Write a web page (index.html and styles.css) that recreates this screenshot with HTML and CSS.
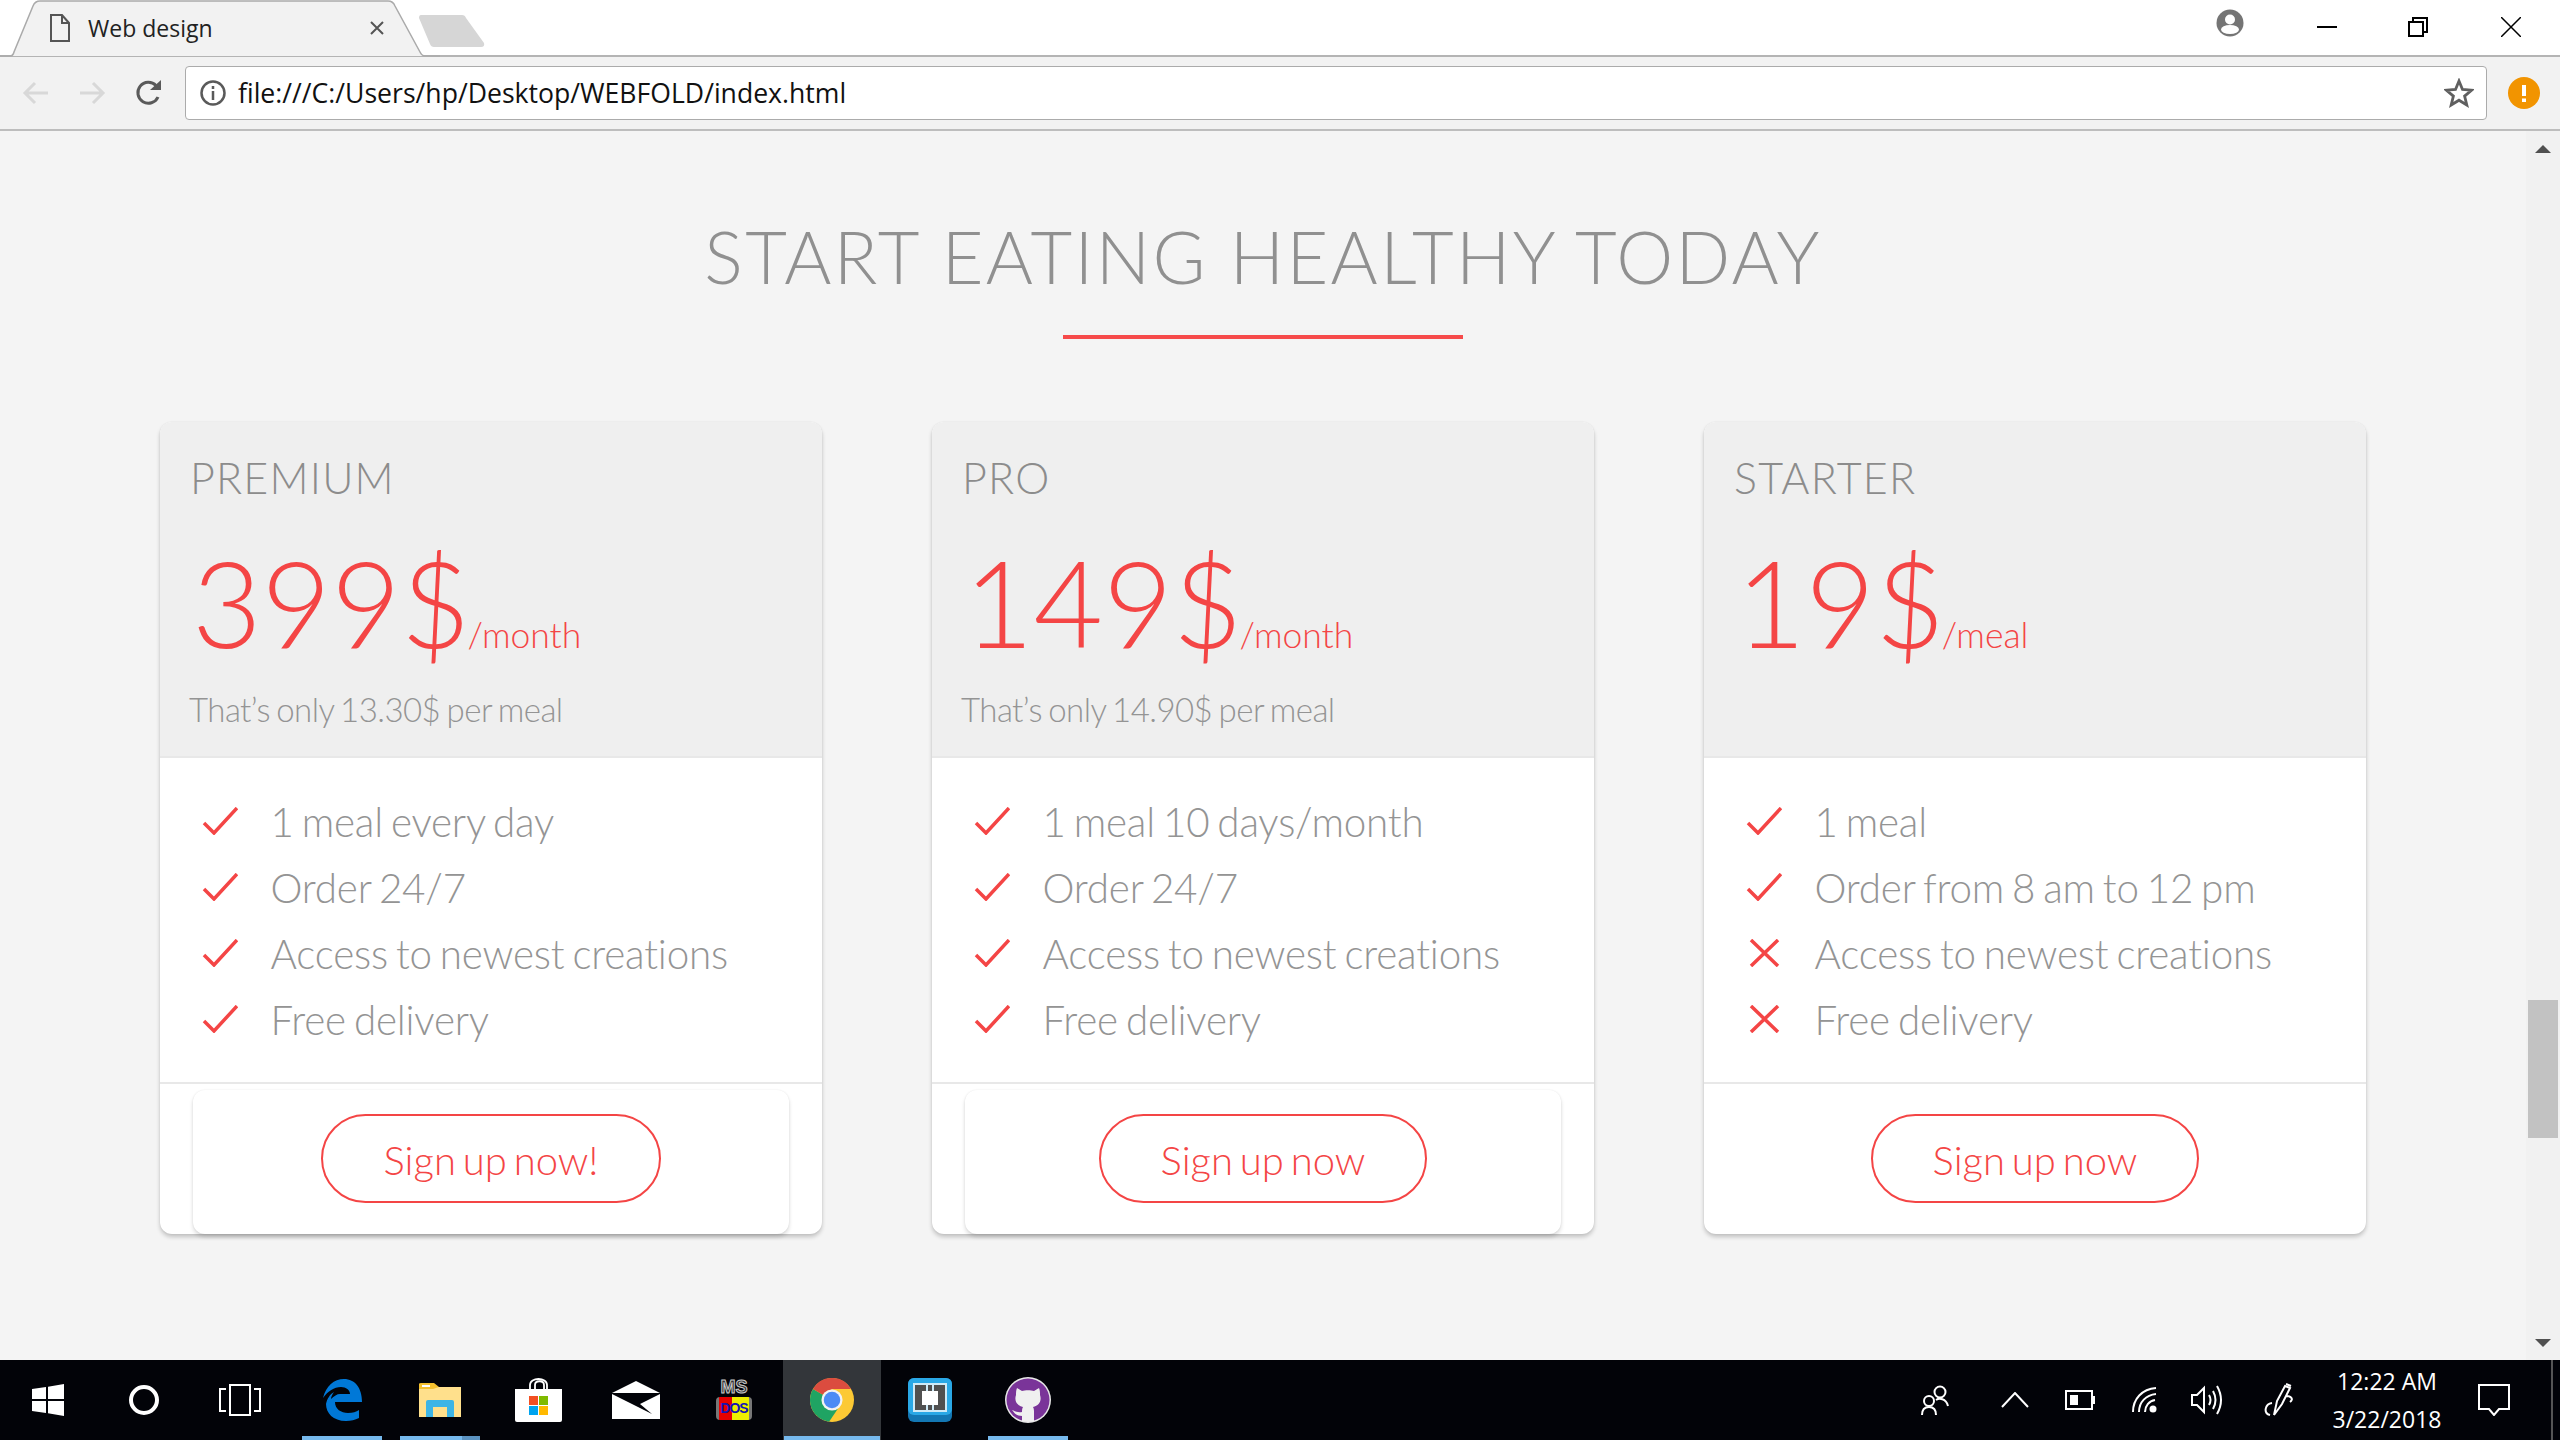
FILE: index.html
```html
<!DOCTYPE html>
<html lang="en">
<head>
<meta charset="utf-8">
<title>Web design</title>
<link rel="stylesheet" href="styles.css">
</head>
<body>
<div class="window">
  <header class="tabstrip">
    <div class="tab">
      <svg class="tab-shape" width="440" height="58" viewBox="0 0 440 58"><path d="M0 56H10Q13 56 14 52L33 6Q35 1 40 1H388Q393 1 395 6L420 52Q422 56 425 56H440" fill="#f2f2f2" stroke="#aaa" stroke-width="1.5"/></svg>
      <svg class="tab-doc" width="22" height="30" viewBox="0 0 22 30"><path d="M2 2H13L20 10V28H2ZM13 2V10H20" fill="none" stroke="#555" stroke-width="2"/></svg>
      <span class="tab-title">Web design</span>
      <svg class="tab-x" width="16" height="16" viewBox="0 0 16 16"><path d="M2 2L14 14M14 2L2 14" stroke="#555" stroke-width="2"/></svg>
    </div>
    <svg class="newtab" width="68" height="34" viewBox="0 0 68 34"><path d="M3 1H44Q47 1 48 4L66 29Q67 33 63 33H16Q13 33 12 30L1 4Q1 1 3 1Z" fill="#d6d6d6"/></svg>
    <div class="winctl">
      <svg class="profile" width="28" height="28" viewBox="0 0 28 28"><circle cx="14" cy="14" r="13.5" fill="#757575"/><circle cx="14" cy="10.5" r="5" fill="#fff"/><ellipse cx="14" cy="20.5" rx="9" ry="4.5" fill="#fff"/></svg>
      <svg class="min" width="20" height="20" viewBox="0 0 20 20"><path d="M0 10H20" stroke="#000" stroke-width="2"/></svg>
      <svg class="restore" width="20" height="20" viewBox="0 0 20 20"><path d="M1 5H15V19H1ZM5 5V1H19V15H15" fill="none" stroke="#000" stroke-width="2"/></svg>
      <svg class="close" width="20" height="20" viewBox="0 0 20 20"><path d="M0 0L20 20M20 0L0 20" stroke="#000" stroke-width="1.5"/></svg>
    </div>
  </header>
  <nav class="toolbar">
    <svg class="nav-back" width="28" height="28" viewBox="0 0 28 28"><path d="M26 14H3M13 4L3 14L13 24" fill="none" stroke="#d8d8d8" stroke-width="3"/></svg>
    <svg class="nav-fwd" width="28" height="28" viewBox="0 0 28 28"><path d="M2 14H25M15 4L25 14L15 24" fill="none" stroke="#d8d8d8" stroke-width="3"/></svg>
    <svg class="nav-reload" width="28" height="28" viewBox="0 0 28 28"><path d="M23 18A10.5 10.5 0 1 1 21 6.500" fill="none" stroke="#5a5a5a" stroke-width="3"/><path d="M15 11H26V1Z" fill="#5a5a5a"/></svg>
    <div class="omnibox">
      <svg class="info" width="26" height="26" viewBox="0 0 26 26"><circle cx="13" cy="13" r="11.500" fill="none" stroke="#5a5a5a" stroke-width="2.500"/><path d="M13 11V20M13 6V9" stroke="#5a5a5a" stroke-width="2.500"/></svg>
      <span class="url">file:///C:/Users/hp/Desktop/WEBFOLD/index.html</span>
      <svg class="star" width="30" height="30" viewBox="0 0 30 30"><path d="M15 3L18.500 11.500L27.500 12.200L20.600 18.100L22.800 27L15 22.200L7.200 27L9.400 18.100L2.500 12.200L11.500 11.500Z" fill="none" stroke="#5f5f5f" stroke-width="2.800"/></svg>
    </div>
    <svg class="alert" width="32" height="32" viewBox="0 0 32 32"><circle cx="16" cy="16" r="16" fill="#f29400"/><path d="M14 8H18V19H14ZM14 21.500H18V25H14Z" fill="#fff"/></svg>
  </nav>
  <main class="viewport">
    <section class="page">
      <h2 class="heading">START EATING HEALTHY TODAY</h2>
      <div class="rule"></div>
      <div class="plans">
        <article class="plan">
          <div class="plan-head">
            <h3 class="plan-name">PREMIUM</h3>
            <p class="plan-price">399$<span class="plan-per">/month</span></p>
            <p class="plan-note">That’s only 13.30$ per meal</p>
          </div>
          <ul class="features">
            <li class="feature"><svg class="mark" width="36" height="28" viewBox="0 0 36 28"><path d="M2 16L12 26L35 1" fill="none" stroke="#f44545" stroke-width="3.500"/></svg>1 meal every day</li>
            <li class="feature"><svg class="mark" width="36" height="28" viewBox="0 0 36 28"><path d="M2 16L12 26L35 1" fill="none" stroke="#f44545" stroke-width="3.500"/></svg>Order 24/7</li>
            <li class="feature"><svg class="mark" width="36" height="28" viewBox="0 0 36 28"><path d="M2 16L12 26L35 1" fill="none" stroke="#f44545" stroke-width="3.500"/></svg>Access to newest creations</li>
            <li class="feature"><svg class="mark" width="36" height="28" viewBox="0 0 36 28"><path d="M2 16L12 26L35 1" fill="none" stroke="#f44545" stroke-width="3.500"/></svg>Free delivery</li>
          </ul>
          <div class="plan-foot"><div class="foot-inner"><a class="btn">Sign up now!</a></div></div>
        </article>
        <article class="plan">
          <div class="plan-head">
            <h3 class="plan-name">PRO</h3>
            <p class="plan-price">149$<span class="plan-per">/month</span></p>
            <p class="plan-note">That’s only 14.90$ per meal</p>
          </div>
          <ul class="features">
            <li class="feature"><svg class="mark" width="36" height="28" viewBox="0 0 36 28"><path d="M2 16L12 26L35 1" fill="none" stroke="#f44545" stroke-width="3.500"/></svg>1 meal 10 days/month</li>
            <li class="feature"><svg class="mark" width="36" height="28" viewBox="0 0 36 28"><path d="M2 16L12 26L35 1" fill="none" stroke="#f44545" stroke-width="3.500"/></svg>Order 24/7</li>
            <li class="feature"><svg class="mark" width="36" height="28" viewBox="0 0 36 28"><path d="M2 16L12 26L35 1" fill="none" stroke="#f44545" stroke-width="3.500"/></svg>Access to newest creations</li>
            <li class="feature"><svg class="mark" width="36" height="28" viewBox="0 0 36 28"><path d="M2 16L12 26L35 1" fill="none" stroke="#f44545" stroke-width="3.500"/></svg>Free delivery</li>
          </ul>
          <div class="plan-foot"><div class="foot-inner"><a class="btn">Sign up now</a></div></div>
        </article>
        <article class="plan">
          <div class="plan-head">
            <h3 class="plan-name">STARTER</h3>
            <p class="plan-price">19$<span class="plan-per">/meal</span></p>
            <p class="plan-note">&nbsp;</p>
          </div>
          <ul class="features">
            <li class="feature"><svg class="mark" width="36" height="28" viewBox="0 0 36 28"><path d="M2 16L12 26L35 1" fill="none" stroke="#f44545" stroke-width="3.500"/></svg>1 meal</li>
            <li class="feature"><svg class="mark" width="36" height="28" viewBox="0 0 36 28"><path d="M2 16L12 26L35 1" fill="none" stroke="#f44545" stroke-width="3.500"/></svg>Order from 8 am to 12 pm</li>
            <li class="feature"><svg class="mark" width="36" height="28" viewBox="0 0 36 28"><path d="M5 1L32 27M32 1L5 27" fill="none" stroke="#f44545" stroke-width="3.500"/></svg>Access to newest creations</li>
            <li class="feature"><svg class="mark" width="36" height="28" viewBox="0 0 36 28"><path d="M5 1L32 27M32 1L5 27" fill="none" stroke="#f44545" stroke-width="3.500"/></svg>Free delivery</li>
          </ul>
          <div class="plan-foot"><div class="foot-plain"><a class="btn">Sign up now</a></div></div>
        </article>
      </div>
    </section>
    <aside class="scrollbar">
      <span class="arrow-up"></span>
      <span class="thumb"></span>
      <span class="arrow-down"></span>
    </aside>
  </main>
  <footer class="taskbar">
    <svg class="tb tb-win" width="32" height="32" viewBox="0 0 32 32"><path d="M0 5L14 3V15H0ZM16 2.700L32 0V15H16ZM0 17H14V29L0 27ZM16 17H32V32L16 29.300Z" fill="#fff"/></svg>
    <svg class="tb tb-cortana" width="32" height="32" viewBox="0 0 32 32"><circle cx="16" cy="16" r="13" fill="none" stroke="#fff" stroke-width="4"/></svg>
    <svg class="tb tb-view" width="42" height="32" viewBox="0 0 42 32"><path d="M11 1H31V31H11ZM7 5H1V27H7M35 5H41V27H35" fill="none" stroke="#fff" stroke-width="2"/></svg>
    <div class="app app-edge"><svg width="40" height="42" viewBox="0 0 40 42"><path d="M1 19C4 7 12 0 22 0C33 0 40 9 40 23H13C13 30 19 34 26 34C31 34 34 33 37 31V39C33 41 29 42 24 42C11 42 4 34 4 25C5 20 8 15 12 13C10 16 9 18 9 20C12 17 15 15 18 15H28C28 11 24 8 19 8C12 8 6 12 1 19Z" fill="#0078d7"/></svg></div>
    <div class="app app-folder"><svg width="42" height="34" viewBox="0 0 42 34"><path d="M0 3H15L19 4H42V34H0Z" fill="#ffe08c"/><path d="M0 1Q0 0 2 0H15L20 4L14 6H0Z" fill="#f5c02e"/><rect x="3" y="2" width="8" height="2" fill="#fff"/><path d="M7 34V19Q7 17 9 17H33Q35 17 35 19V34H28V24H14V34Z" fill="#3db5e6"/></svg></div>
    <div class="app app-store"><svg width="47" height="46" viewBox="0 0 47 46"><path d="M15 13V8C15 0 32 0 32 8V13M20 13V8C20 3 29 3 29 8V13" fill="none" stroke="#fff" stroke-width="1.800"/><path d="M0 12H47V43Q47 45 45 45H2Q0 45 0 43Z" fill="#fff"/><rect x="14" y="19" width="9" height="9" fill="#f25022"/><rect x="24" y="19" width="9" height="9" fill="#7fba00"/><rect x="14" y="29" width="9" height="9" fill="#00a4ef"/><rect x="24" y="29" width="9" height="9" fill="#ffb900"/></svg></div>
    <div class="app app-mail"><svg width="48" height="38" viewBox="0 0 48 38"><path d="M24 0L48 12H0Z" fill="#fff"/><path d="M0 13L26 26L40 33L28 23L48 13V38H0Z" fill="#fff"/></svg></div>
    <div class="app app-dos"><span class="dos-ms">MS</span><span class="dos-logo">DOS</span></div>
    <div class="app app-chrome"><svg width="44" height="44" viewBox="0 0 48 48"><circle cx="24" cy="24" r="24" fill="#fcc934"/><path d="M3.200 12A24 24 0 0 0 20.800 47.800L30 34L24 24L13.600 18Z" fill="#1fa463"/><path d="M3.200 12A24 24 0 0 1 44.800 12H24L13.600 18Z" fill="#db4c3f"/><circle cx="24" cy="24" r="11.500" fill="#f2f2f2"/><circle cx="24" cy="24" r="9" fill="#4c8bf5"/></svg></div>
    <div class="app app-brackets"><svg width="44" height="44" viewBox="0 0 44 44"><rect width="44" height="44" rx="6" fill="#1377b3"/><rect width="44" height="37" rx="6" fill="#2aa8e6"/><rect x="5" y="5" width="34" height="29" fill="#cfeaf7"/><rect x="7" y="7" width="30" height="25" fill="#505050"/><rect x="14" y="13" width="16" height="14" fill="#fff"/><rect x="18" y="7" width="2" height="6" fill="#cfeaf7"/><rect x="24" y="7" width="2" height="6" fill="#cfeaf7"/><rect x="18" y="27" width="2" height="5" fill="#cfeaf7"/><rect x="24" y="27" width="2" height="5" fill="#cfeaf7"/></svg></div>
    <div class="app app-github"><svg width="46" height="46" viewBox="0 0 46 46"><circle cx="23" cy="23" r="23" fill="#e8e8e8"/><circle cx="23" cy="23" r="21.500" fill="#7a3499"/><path d="M12 11L17 14C20 13 26 13 29 14L34 11C35 13 35 16 35 18C37 24 34 29 28 30C29 32 29 33 29 36V44Q23 46 17 44V39C12 39 10 37 7 33C10 34 13 36 17 35C17 33 17 32 18 30C12 29 9 24 11 18C11 16 11 13 12 11Z" fill="#f0f0f0"/></svg></div>
    <div class="tray">
      <svg class="ti ti-people" width="30" height="32" viewBox="0 0 30 32"><circle cx="20" cy="8" r="5.500" fill="none" stroke="#fff" stroke-width="2"/><circle cx="9" cy="17" r="5" fill="none" stroke="#fff" stroke-width="2"/><path d="M2 31C2 25 5 23 9 23C13 23 16 25 16 31M16 16C19 14 26 14 28 22" fill="none" stroke="#fff" stroke-width="2"/></svg>
      <svg class="ti ti-chev" width="28" height="16" viewBox="0 0 28 16"><path d="M1 15L14 1L27 15" fill="none" stroke="#fff" stroke-width="2"/></svg>
      <svg class="ti ti-batt" width="30" height="20" viewBox="0 0 30 20"><path d="M1 1H27V19H1Z" fill="none" stroke="#fff" stroke-width="2"/><rect x="5" y="5" width="8" height="10" fill="#fff"/><rect x="28" y="6" width="2" height="8" fill="#fff"/></svg>
      <svg class="ti ti-wifi" width="26" height="26" viewBox="0 0 26 26"><path d="M1 25C1 12 10 2 24 1M7 25C7 15 14 8 24 7M13 25C13 19 17 14 23 13" fill="none" stroke="#fff" stroke-width="2"/><circle cx="21" cy="22" r="3.500" fill="#fff"/></svg>
      <svg class="ti ti-sound" width="32" height="30" viewBox="0 0 32 30"><path d="M1 10H6L13 3V27L6 20H1Z" fill="none" stroke="#fff" stroke-width="2"/><path d="M18 10Q21 15 18 20M22 6Q27 15 22 24M26 1Q34 15 26 29" fill="none" stroke="#fff" stroke-width="2"/></svg>
      <svg class="ti ti-pen" width="32" height="34" viewBox="0 0 32 34"><path d="M11 32L14 18L22 3L27 5L19 21ZM23 1L28 3M23 13C28 13 31 16 27 19M9 20C2 21 0 30 7 32" fill="none" stroke="#fff" stroke-width="2"/></svg>
      <div class="clock"><span class="clock-time">12:22 AM</span><span class="clock-date">3/22/2018</span></div>
      <svg class="ti ti-notify" width="32" height="32" viewBox="0 0 32 32"><path d="M1 1H31V25H21L16 31L11 25H1Z" fill="none" stroke="#fff" stroke-width="2"/></svg>
      <span class="peek"></span>
    </div>
    <span class="ul ul-edge"></span><span class="ul ul-folder"></span><span class="ul ul-folder2"></span><span class="ul ul-chrome"></span><span class="ul ul-github"></span>
  </footer>
</div>
</body>
</html>
```
FILE: styles.css
```css
* { box-sizing: border-box; }
html, body { margin: 0; padding: 0; width: 2560px; height: 1440px; overflow: hidden; }
body { font-family: "Lato", "Liberation Sans", sans-serif; background: #f4f4f4; }
.window { display: flex; flex-direction: column; height: 1440px; }

.tabstrip { position: relative; height: 57px; flex: none; display: flex; background: #fff; border-bottom: 2px solid #b4b4b4; }
.tab { position: relative; width: 424px; height: 56px; display: flex; align-items: center; }
.tab-shape { position: absolute; left: 0; top: 0; }
.tab-doc { position: relative; margin: 0 0 0 49px; }
.tab-title { position: relative; margin-left: 17px; font: 400 23px "Open Sans", sans-serif; color: #222; width: 281px; }
.tab-x { position: relative; }
.newtab { margin: 14px 0 0 -6px; }
.winctl { margin-left: auto; display: flex; align-items: flex-start; }
.profile { margin: 9px 73px 0 0; }
.min { margin: 17px 71px 0 0; }
.restore { margin: 17px 73px 0 0; }
.close { margin: 17px 39px 0 0; }

.toolbar { height: 74px; flex: none; display: flex; align-items: center; background: #f2f2f2; border-bottom: 2px solid #bdbdbd; padding-left: 22px; }
.nav-fwd { margin-left: 28px; }
.nav-reload { margin-left: 29px; }
.omnibox { margin-left: 22px; width: 2302px; height: 54px; flex: none; background: #fff; border: 1.5px solid #ababab; border-radius: 4px; display: flex; align-items: center; padding-left: 14px; }
.url { margin-left: 12px; font: 400 26.6px "Open Sans", sans-serif; color: #111; }
.star { margin-left: auto; margin-right: 12px; }
.alert { margin-left: 21px; }

.viewport { flex: 1; display: flex; min-height: 0; }
.page { flex: 1; display: flex; flex-direction: column; background: #f4f4f4; padding-top: 79px; }
.heading { margin: 0; text-align: center; font-weight: 300; font-size: 72px; line-height: 92px; color: #909090; letter-spacing: 2.4px; }
.rule { width: 400px; height: 4px; background: #f64a4a; margin: 33px 0 0 1063px; }
.plans { display: grid; grid-template-columns: repeat(3, 662px); column-gap: 110px; padding-left: 160px; margin-top: 83px; }
.plan { background: #fff; border-radius: 12px; box-shadow: 0 3px 4px rgba(0,0,0,.2), 0 0 2px rgba(0,0,0,.08); display: flex; flex-direction: column; height: 812px; }
.plan-head { height: 336px; background: #efefef; border-radius: 12px 12px 0 0; border-bottom: 2px solid #e8e8e8; padding: 30px 30px 0 30px; }
.plan-name { margin: 0; font-weight: 300; font-size: 43px; letter-spacing: 1.2px; line-height: 52px; color: #8c8c8c; }
.plan-price { margin: 48px 0 0 2px; font-weight: 300; font-size: 120px; line-height: 100px; color: #f44545; }
.plan-per { font-size: 35.5px; margin-left: -3px; }
.plan-note { margin: 4px 0 0 -1px; font-weight: 300; font-size: 33px; line-height: 40px; color: #949494; word-spacing: -2px; letter-spacing: -.55px; }
.features { list-style: none; margin: 0; padding: 30px 0 0 42px; height: 326px; border-bottom: 2px solid #e8e8e8; flex: none; }
.feature { height: 66px; display: flex; align-items: center; font-weight: 300; font-size: 40.4px; word-spacing: -2.8px; letter-spacing: -.2px; color: #949494; }
.mark { margin-right: 32.500px; flex: none; }
.plan-foot { flex: 1; display: flex; justify-content: center; }
.foot-inner { margin-top: 6px; width: 596px; display: flex; justify-content: center; padding-top: 24px; background: #fff; border-radius: 12px; box-shadow: 0 3px 4px rgba(0,0,0,.14), 0 0 2px rgba(0,0,0,.08); }
.foot-plain { padding-top: 30px; }
.btn { display: flex; align-items: center; justify-content: center; height: 89px; padding: 2px 60px 0; border: 2.500px solid #f44545; border-radius: 45px; color: #f44545; font-weight: 300; font-size: 40px; word-spacing: -4px; }

.scrollbar { width: 34px; flex: none; background: #f1f1f1; display: flex; flex-direction: column; align-items: center; position: relative; }
.arrow-up { margin-top: 14px; width: 0; height: 0; border: 8px solid transparent; border-top: 0; border-bottom-color: #505050; }
.thumb { margin-top: 847px; width: 30px; height: 138px; background: #c2c2c2; }
.arrow-down { margin-top: 201px; width: 0; height: 0; border: 8px solid transparent; border-bottom: 0; border-top-color: #505050; }

.taskbar { position: relative; height: 80px; flex: none; background: #020308; display: flex; align-items: center; }
.tb-win { margin-left: 32px; }
.tb-cortana { margin-left: 64px; }
.tb-view { margin-left: 59px; }
.app { width: 98px; height: 80px; display: flex; align-items: center; justify-content: center; flex: none; }
.app-edge { margin-left: 32px; }
.app-chrome { background: #33363a; }
.app-dos { flex-direction: column; font-family: "Liberation Sans", sans-serif; font-weight: 700; gap: 3px; }
.dos-ms { color: #333; -webkit-text-stroke: 1px #c8c8c8; line-height: 14px; font-size: 18px; }
.dos-logo { width: 36px; height: 23px; border-radius: 4px; background: linear-gradient(90deg, #777 0 8%, #e60000 8% 45%, #ee0 45% 92%, #777 92%); color: #1414b4; text-align: center; font-size: 14px; line-height: 23px; letter-spacing: -1px; }
.tray { margin-left: auto; display: flex; align-items: center; color: #fff; height: 80px; }
.ti { flex: none; }
.ti-people { margin-right: 51px; }
.ti-chev { margin-right: 36px; }
.ti-batt { margin-right: 37px; }
.ti-wifi { margin-right: 33px; }
.ti-sound { margin-right: 40px; }
.ti-pen { margin-right: 17px; }
.clock { width: 150px; display: flex; flex-direction: column; align-items: center; font: 400 23px/38px "Open Sans", sans-serif; }
.ti-notify { margin: 0 41px 0 16px; }
.peek { width: 2px; height: 80px; background: #555; margin-right: 7px; }
.ul { position: absolute; bottom: 0; height: 4px; background: #76b9ed; }
.ul-edge { left: 302px; width: 80px; }
.ul-folder { left: 400px; width: 62px; }
.ul-folder2 { left: 462px; width: 18px; background: #5b93c1; }
.ul-chrome { left: 784px; width: 96px; }
.ul-github { left: 988px; width: 80px; }
```
